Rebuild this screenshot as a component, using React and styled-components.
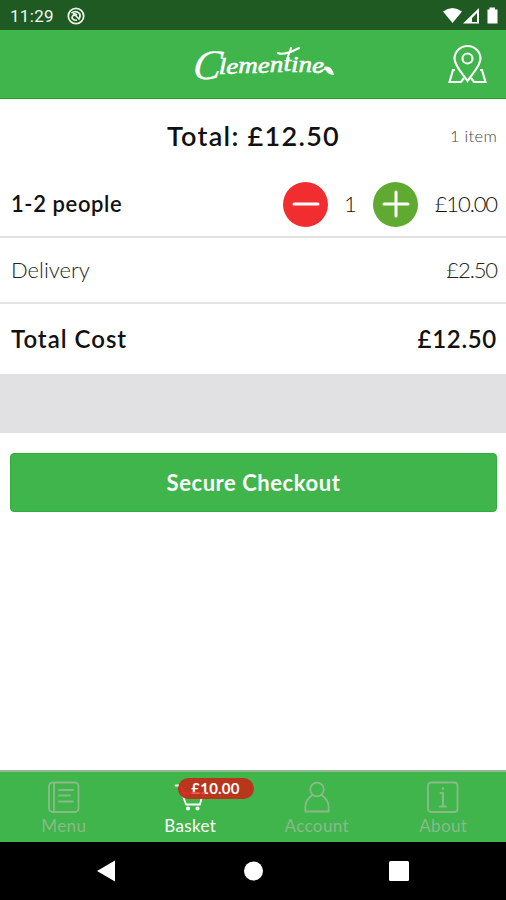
import React from "react";
import styled, { createGlobalStyle } from "styled-components";

const GREEN = "#3fb54b";
const MUTED = "#8aba8a";

const GlobalStyle = createGlobalStyle`
  * { box-sizing: border-box; }
  body { margin: 0; background: #fff; }
`;

const Screen = styled.main`
  width: 506px;
  height: 900px;
  display: flex;
  flex-direction: column;
  background: #fff;
  color: #111;
  font-family: Lato, "Open Sans", sans-serif;
  overflow: hidden;
`;

const StatusBar = styled.div`
  height: 30px;
  flex: none;
  display: flex;
  align-items: center;
  justify-content: space-between;
  padding: 1px 8px 0 10px;
  background: #1f5a22;
  color: #f1f6f1;
`;

const StatusGroup = styled.div`
  display: flex;
  align-items: center;
  gap: ${(p) => p.$gap}px;
`;

const Clock = styled.span`
  font: 400 17px/20px Roboto, sans-serif;
  letter-spacing: 0.3px;
`;

const Header = styled.header`
  height: 69px;
  flex: none;
  display: grid;
  grid-template-columns: 188px 152px 1fr;
  align-items: center;
  padding-right: 19px;
  background: ${GREEN};
  border-bottom: 1px solid #21a02b;
`;

const LogoImage = styled.svg`
  grid-column: 2;
  width: 152px;
  height: 60px;
  display: block;
  overflow: visible;
`;

const MapButton = styled.button`
  justify-self: end;
  padding: 0;
  border: 0;
  background: none;
  height: 40px;
`;

const Summary = styled.section`
  height: 73px;
  flex: none;
  display: grid;
  grid-template-columns: 1fr auto 1fr;
  align-items: center;
  padding: 0 9px 0 10px;
`;

const SummaryTotal = styled.h1`
  grid-column: 2;
  margin: 0;
  font-size: 27px;
  font-weight: 600;
  line-height: 32px;
  letter-spacing: 1.3px;
  white-space: nowrap;
`;

const ItemCount = styled.span`
  justify-self: end;
  padding-top: 1px;
  font-size: 16.5px;
  font-weight: 300;
  letter-spacing: 0.3px;
  color: #444;
`;

const Row = styled.div`
  height: ${(p) => p.$height}px;
  flex: none;
  display: flex;
  align-items: center;
  justify-content: space-between;
  padding: 0 9px 0 11px;
  border-bottom: ${(p) => (p.$line ? "2px solid #e3e3e5" : "0")};
`;

const Label = styled.span`
  font-size: ${(p) => p.$size}px;
  line-height: 30px;
  font-weight: ${(p) => (p.$strong ? 600 : 300)};
  letter-spacing: ${(p) => p.$spacing ?? 0}px;
  color: ${(p) => (p.$strong ? "#111" : "#222")};
  white-space: nowrap;
`;

const Stepper = styled.div`
  display: flex;
  align-items: center;
`;

const RoundButton = styled.button`
  width: 45px;
  height: 45px;
  padding: 0;
  border: 0;
  border-radius: 50%;
  display: grid;
  place-items: center;
  background: ${(p) => p.$color};
`;

const Quantity = styled.span`
  width: 45px;
  text-align: center;
  font-size: 22px;
  line-height: 28px;
  font-weight: 300;
  color: #111;
`;

const LinePrice = styled.span`
  width: 79px;
  text-align: right;
  font-size: 22px;
  line-height: 28px;
  font-weight: 300;
  letter-spacing: -1.1px;
  color: #111;
`;

const Divider = styled.div`
  height: 59px;
  flex: none;
  background: #e1e1e4;
`;

const CheckoutArea = styled.section`
  flex: 1;
  padding: 20px 9px 0 10px;
`;

const CheckoutButton = styled.button`
  width: 100%;
  height: 59px;
  padding: 0;
  border: 1px solid #2fae3c;
  border-radius: 4px;
  background: ${GREEN};
  color: #fff;
  font: 700 22px/30px Lato, sans-serif;
  letter-spacing: 0.55px;
`;

const TabBar = styled.nav`
  height: 72px;
  flex: none;
  display: grid;
  grid-template-columns: repeat(4, 1fr);
  background: ${GREEN};
  border-top: 2px solid #93b994;
`;

const Tab = styled.a`
  position: relative;
  display: flex;
  flex-direction: column;
  align-items: center;
  padding: 9px 0 0 1px;
  color: ${(p) => (p.$active ? "#fff" : MUTED)};
  font-size: 17px;
  line-height: 20px;
  letter-spacing: 0.4px;
  gap: 3px;
`;

const TabIcon = styled.svg`
  width: 32px;
  height: 32px;
  flex: none;
  fill: none;
  stroke: currentColor;
  stroke-width: 1.8;
  stroke-linecap: round;
  stroke-linejoin: round;
`;

const Badge = styled.span`
  position: absolute;
  left: 51px;
  top: 6px;
  width: 76px;
  height: 21px;
  border-radius: 11px;
  background: #b9351c;
  color: #fff;
  text-align: center;
  font-size: 15px;
  font-weight: 700;
  line-height: 21px;
  letter-spacing: 0.2px;
`;

const CartOverlay = styled.svg`
  position: absolute;
  left: 48px;
  top: 9px;
  width: 32px;
  height: 32px;
  fill: none;
  stroke: #e52d2b;
  stroke-width: 1.5;
`;

const SystemNav = styled.footer`
  height: 58px;
  flex: none;
  display: grid;
  grid-template-columns: 180px 1fr 180px;
  align-items: center;
  background: #000;
`;

const NavIcon = styled.svg`
  width: 22px;
  height: 22px;
  fill: #fff;
  display: block;
  justify-self: ${(p) => p.$side};
  margin: 0 ${(p) => p.$inset}px;
`;

function Logo() {
  return (
    <LogoImage viewBox="188 35 152 60" fill="#fff" role="img" aria-label="Clementine">
      <g fontFamily="Liberation Serif, serif" fontStyle="italic" stroke="#fff">
        <text transform="skewX(-8)" x="203" y="80" fontSize="42" strokeWidth=".3">C</text>
        <text
          transform="scale(1.13 1)"
          x="193.500"
          y="75"
          dy="0 0 -.5 -.5 -.5 -1 .5 .5 1"
          fontSize="24"
          strokeWidth=".6"
        >
          lementine
        </text>
      </g>
      <path d="M278 54Q284 57 299 49M291 49L287 60" fill="none" stroke="#fff" strokeWidth="2" strokeLinecap="round" />
      <path d="M318 74Q322 71 327 69" fill="none" stroke="#fff" strokeWidth="1.8" />
      <path d="M324 68C330 66 333 71 334 76C329 76 326 73 324 68Z" />
    </LogoImage>
  );
}

function App() {
  return (
    <Screen>
      <GlobalStyle />
      <StatusBar>
        <StatusGroup $gap={13}>
          <Clock>11:29</Clock>
          <svg width="18" height="18" viewBox="0 0 18 18" fill="none" stroke="#e8f1e8">
            <circle cx="9" cy="9" r="7.7" strokeWidth="1.8" />
            <path d="M4.500 6Q9 3 12.500 6.500Q14 9 12 12L8 8Q5 8 5 11Q7 14 10 13" strokeWidth="1.7" />
            <path d="M6 6.500L10 8" strokeWidth="2" />
          </svg>
        </StatusGroup>
        <svg width="56" height="18" viewBox="442 6 56 18" fill="#fff">
          <path d="M443 10.500Q452.500 3.500 462 10.500L452.500 22Z" />
          <path fillRule="evenodd" d="M479 7V22.500H463ZM477 12L472 17V21H477Z" />
          <path d="M489.500 6.500H495V8.500H497.500V22.500H487.500V8.500H489.500Z" />
        </svg>
      </StatusBar>
      <Header>
        <Logo />
        <MapButton aria-label="Map">
          <svg width="39" height="40" viewBox="448 44 39 40" fill="none" stroke="#fff" strokeWidth="2.1" strokeLinejoin="miter">
            <path d="M467.500 81C463 74 454.500 66 454.500 58.500A13 12.500 0 0 1 480.500 58.500C480.500 66 472 74 467.500 81Z" />
            <circle cx="467.500" cy="58.500" r="5" />
            <path d="M455 70H453L449.500 82H461L464 78M480 70H482L485.500 82H474L471 78" />
          </svg>
        </MapButton>
      </Header>
      <Summary>
        <SummaryTotal>Total: £12.50</SummaryTotal>
        <ItemCount>1 item</ItemCount>
      </Summary>
      <Row $height={66} $line>
        <Label $size={22} $strong $spacing={0.6}>1-2 people</Label>
        <Stepper>
          <RoundButton $color="#f12d30" aria-label="Remove one">
            <svg width="28" height="28" viewBox="0 0 28 28" stroke="#fff" strokeWidth="3" strokeLinecap="round"><path d="M2 14H26" /></svg>
          </RoundButton>
          <Quantity>1</Quantity>
          <RoundButton $color="#61aa31" aria-label="Add one">
            <svg width="28" height="28" viewBox="0 0 28 28" stroke="#fff" strokeWidth="3" strokeLinecap="round"><path d="M2 14H26M14 2V26" /></svg>
          </RoundButton>
          <LinePrice>£10.00</LinePrice>
        </Stepper>
      </Row>
      <Row $height={66} $line>
        <Label $size={22}>Delivery</Label>
        <Label $size={22} $spacing={-1.1}>£2.50</Label>
      </Row>
      <Row $height={70}>
        <Label $size={24} $strong $spacing={1}>Total Cost</Label>
        <Label $size={24} $strong $spacing={0.7}>£12.50</Label>
      </Row>
      <Divider />
      <CheckoutArea>
        <CheckoutButton>Secure Checkout</CheckoutButton>
      </CheckoutArea>
      <TabBar>
        <Tab>
          <TabIcon viewBox="0 0 32 32">
            <rect x="1" y="1.500" width="29.500" height="29.500" rx="3.500" />
            <path d="M6 2V30M11 9H25M11 14.500H22M11 20.500H25" />
          </TabIcon>
          Menu
        </Tab>
        <Tab $active>
          <TabIcon viewBox="0 0 32 32">
            <path d="M1.500 4.500H5.500L12 23.500H26L29 11" />
            <circle cx="14" cy="27.500" r="1.200" fill="currentColor" />
            <circle cx="23.500" cy="27.500" r="1.200" fill="currentColor" />
          </TabIcon>
          Basket
          <Badge>£10.00</Badge>
          <CartOverlay viewBox="0 0 32 32"><path d="M6 5L9.500 15.500M8 12H29L28 16" /></CartOverlay>
        </Tab>
        <Tab>
          <TabIcon viewBox="0 0 32 32">
            <circle cx="16" cy="8.500" r="6.800" />
            <path d="M11.500 14C7 17 4.500 21 4.300 26V30.500H27.700V26C27.500 21 25 17 20.500 14" />
          </TabIcon>
          Account
        </Tab>
        <Tab>
          <TabIcon viewBox="0 0 32 32">
            <rect x="1" y="1.500" width="29.500" height="29.500" rx="3" />
            <path d="M13.500 12H16V25M13 25.500H19M16 7V8" strokeWidth="2.100" />
          </TabIcon>
          About
        </Tab>
      </TabBar>
      <SystemNav>
        <NavIcon $side="start" $inset={95} viewBox="0 0 22 22"><path d="M2 11L20 0.500V21.500Z" /></NavIcon>
        <NavIcon $side="center" $inset={0} viewBox="0 0 22 22"><circle cx="11.500" cy="11" r="9.500" /></NavIcon>
        <NavIcon $side="end" $inset={96} viewBox="0 0 22 22"><rect x="1" y="1" width="20" height="20" rx="1.500" /></NavIcon>
      </SystemNav>
    </Screen>
  );
}

export default App;
